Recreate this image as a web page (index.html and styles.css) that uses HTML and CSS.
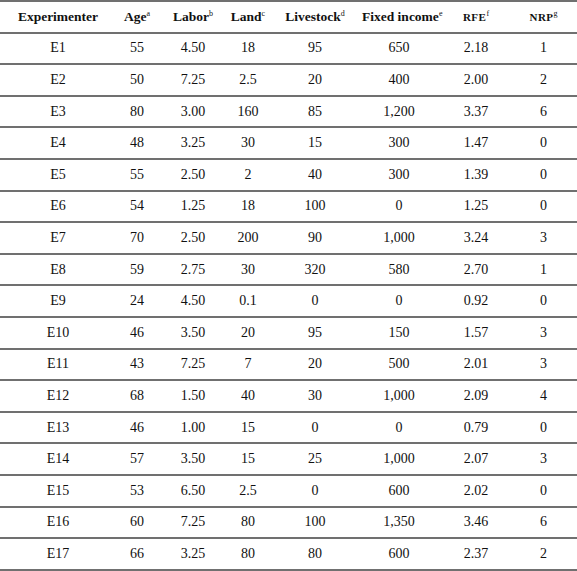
FILE: index.html
```html
<!DOCTYPE html>
<html>
<head>
<meta charset="utf-8">
<link rel="stylesheet" href="styles.css">
</head>
<body>
<table class="data">
<colgroup>
<col class="c1"><col class="c2"><col class="c3"><col class="c4"><col class="c5"><col class="c6"><col class="c7"><col class="c8">
</colgroup>
<thead>
<tr><th>Experimenter</th><th>Age<sup>a</sup></th><th>Labor<sup>b</sup></th><th>Land<sup>c</sup></th><th>Livestock<sup>d</sup></th><th>Fixed income<sup>e</sup></th><th><span class="sc">RFE</span><sup>f</sup></th><th><span class="sc">NRP</span><sup>g</sup></th></tr>
</thead>
<tbody>
<tr><td>E1</td><td>55</td><td>4.50</td><td>18</td><td>95</td><td>650</td><td>2.18</td><td>1</td></tr>
<tr><td>E2</td><td>50</td><td>7.25</td><td>2.5</td><td>20</td><td>400</td><td>2.00</td><td>2</td></tr>
<tr><td>E3</td><td>80</td><td>3.00</td><td>160</td><td>85</td><td>1,200</td><td>3.37</td><td>6</td></tr>
<tr><td>E4</td><td>48</td><td>3.25</td><td>30</td><td>15</td><td>300</td><td>1.47</td><td>0</td></tr>
<tr><td>E5</td><td>55</td><td>2.50</td><td>2</td><td>40</td><td>300</td><td>1.39</td><td>0</td></tr>
<tr><td>E6</td><td>54</td><td>1.25</td><td>18</td><td>100</td><td>0</td><td>1.25</td><td>0</td></tr>
<tr><td>E7</td><td>70</td><td>2.50</td><td>200</td><td>90</td><td>1,000</td><td>3.24</td><td>3</td></tr>
<tr><td>E8</td><td>59</td><td>2.75</td><td>30</td><td>320</td><td>580</td><td>2.70</td><td>1</td></tr>
<tr><td>E9</td><td>24</td><td>4.50</td><td>0.1</td><td>0</td><td>0</td><td>0.92</td><td>0</td></tr>
<tr><td>E10</td><td>46</td><td>3.50</td><td>20</td><td>95</td><td>150</td><td>1.57</td><td>3</td></tr>
<tr><td>E11</td><td>43</td><td>7.25</td><td>7</td><td>20</td><td>500</td><td>2.01</td><td>3</td></tr>
<tr><td>E12</td><td>68</td><td>1.50</td><td>40</td><td>30</td><td>1,000</td><td>2.09</td><td>4</td></tr>
<tr><td>E13</td><td>46</td><td>1.00</td><td>15</td><td>0</td><td>0</td><td>0.79</td><td>0</td></tr>
<tr><td>E14</td><td>57</td><td>3.50</td><td>15</td><td>25</td><td>1,000</td><td>2.07</td><td>3</td></tr>
<tr><td>E15</td><td>53</td><td>6.50</td><td>2.5</td><td>0</td><td>600</td><td>2.02</td><td>0</td></tr>
<tr><td>E16</td><td>60</td><td>7.25</td><td>80</td><td>100</td><td>1,350</td><td>3.46</td><td>6</td></tr>
<tr><td>E17</td><td>66</td><td>3.25</td><td>80</td><td>80</td><td>600</td><td>2.37</td><td>2</td></tr>
</tbody>
</table>
</body>
</html>
```
FILE: styles.css
```css
html, body {
  margin: 0;
  padding: 0;
  background: #ffffff;
}
.data {
  width: 577px;
  border-collapse: collapse;
  table-layout: fixed;
  font-family: "Liberation Serif", "Times New Roman", serif;
  font-size: 14px;
  color: #111111;
  border-top: 2px solid #707070;
}
.c1 { width: 116px; }
.c2 { width: 42px; }
.c3 { width: 70px; }
.c4 { width: 40px; }
.c5 { width: 94px; }
.c6 { width: 74px; }
.c7 { width: 80px; }
.c8 { width: 61px; }
.data th, .data td {
  text-align: center;
  padding: 0;
  height: 29.6px;
  border-bottom: 2px solid #707070;
  white-space: nowrap;
}
.data th:last-child, .data td:last-child {
  padding-right: 6px;
}
.data th {
  font-weight: bold;
  font-size: 13.5px;
}
.data sup {
  font-size: 8px;
  line-height: 0;
  vertical-align: 5px;
  font-weight: normal;
}
.sc {
  font-size: 11px;
  letter-spacing: 0.5px;
}
```
